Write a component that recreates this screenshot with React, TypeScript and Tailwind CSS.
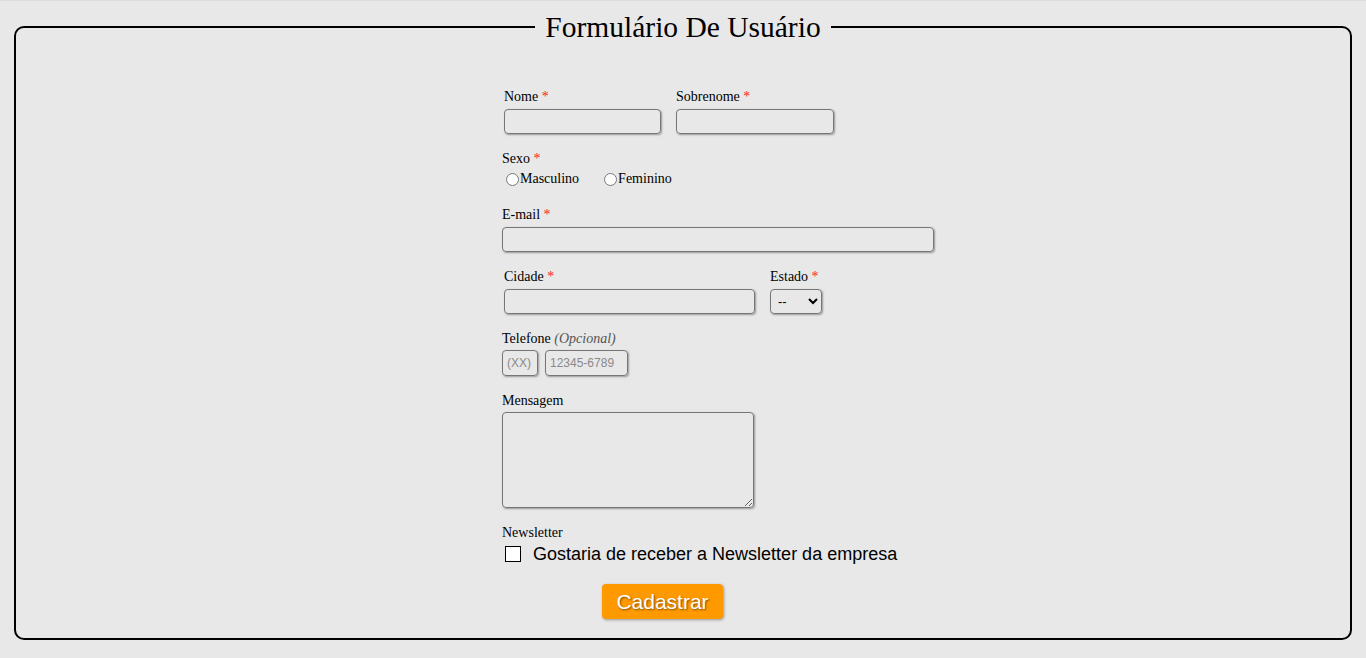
import React from 'react';

// ═══════════════════════════════════════════════════════════════════════════
// HELPERS
// ═══════════════════════════════════════════════════════════════════════════

const Req = () => <span className="text-[#ff1a1a]">*</span>;

const fieldCls =
  'block h-[25px] border border-[#767676] rounded-[4px] bg-transparent shadow-[1px_1px_2px_rgba(0,0,0,0.35)] px-1 outline-none';

const Label: React.FC<{ children: React.ReactNode; className?: string }> = ({ children, className }) => (
  <label className={`block leading-4 text-[14px] ${className ?? ''}`}>{children}</label>
);

// ═══════════════════════════════════════════════════════════════════════════
// COMPONENT
// ═══════════════════════════════════════════════════════════════════════════

export default function App() {
  return (
    <div
      className="min-h-screen bg-[#e8e8e8] border-t border-[#dcdcdc] pt-px pb-[17px] text-black"
      style={{ fontFamily: '"Liberation Serif", "Times New Roman", serif' }}
    >
      <fieldset className="mx-[14px] mt-[9px] border-2 border-black rounded-[10px] pb-[19px]">
        <legend className="mx-auto px-[10px] text-[29.5px] leading-8">Formulário De Usuário</legend>

        <form className="ml-[486px] w-[432px] pt-[46px]" onSubmit={(e) => e.preventDefault()}>
          {/* Nome / Sobrenome */}
          <div className="flex gap-[15px] pl-[2px]">
            <div>
              <Label>
                Nome <Req />
              </Label>
              <input type="text" className={`${fieldCls} mt-1 w-[157px]`} />
            </div>
            <div>
              <Label>
                Sobrenome <Req />
              </Label>
              <input type="text" className={`${fieldCls} mt-1 w-[158px]`} />
            </div>
          </div>

          {/* Sexo */}
          <Label className="mt-[17px]">
            Sexo <Req />
          </Label>
          <div className="flex items-center mt-[4px] text-[14px] leading-4">
            <label className="flex items-center mr-[25px]">
              <input type="radio" name="sexo" className="ml-[4px] mr-[1px] w-[13px] h-[13px]" />
              Masculino
            </label>
            <label className="flex items-center">
              <input type="radio" name="sexo" className="mr-[1px] w-[13px] h-[13px]" />
              Feminino
            </label>
          </div>

          {/* E-mail */}
          <Label className="mt-[20px]">
            E-mail <Req />
          </Label>
          <input type="email" className={`${fieldCls} mt-1 w-[432px]`} />

          {/* Cidade / Estado */}
          <div className="flex gap-[15px] pl-[2px] mt-[17px]">
            <div>
              <Label>
                Cidade <Req />
              </Label>
              <input type="text" className={`${fieldCls} mt-1 w-[251px]`} />
            </div>
            <div>
              <Label>
                Estado <Req />
              </Label>
              <select
                className={`${fieldCls} mt-1 w-[52px] text-[13px] px-[3px]`}
                style={{ fontFamily: '"Liberation Sans", Arial, sans-serif' }}
              >
                <option>--</option>
              </select>
            </div>
          </div>

          {/* Telefone */}
          <Label className="mt-[17px]">
            Telefone <i className="text-[#555]">(Opcional)</i>
          </Label>
          <div
            className="flex gap-[7px] mt-[3px] text-[12px]"
            style={{ fontFamily: '"Liberation Sans", Arial, sans-serif' }}
          >
            <input
              type="text"
              placeholder="(XX)"
              className={`${fieldCls} h-[26px] w-[36px] placeholder:text-[#8a8a8a]`}
            />
            <input
              type="text"
              placeholder="12345-6789"
              className={`${fieldCls} h-[26px] w-[83px] placeholder:text-[#8a8a8a]`}
            />
          </div>

          {/* Mensagem */}
          <Label className="mt-[17px]">Mensagem</Label>
          <textarea className="block mt-[3px] w-[252px] h-[96px] border border-[#767676] rounded-[4px] bg-transparent shadow-[1px_1px_2px_rgba(0,0,0,0.35)] outline-none" />

          {/* Newsletter */}
          <Label className="mt-[17px]">Newsletter</Label>
          <label
            className="flex items-center mt-[3px] text-[18px] leading-5"
            style={{ fontFamily: '"Liberation Sans", Arial, sans-serif' }}
          >
            <input
              type="checkbox"
              className="appearance-none ml-[3px] mr-[12px] w-[16px] h-[16px] border-[1.5px] border-black bg-white"
            />
            Gostaria de receber a Newsletter da empresa
          </label>

          {/* Submit */}
          <button
            type="submit"
            className="block ml-[100px] mt-[20px] w-[121px] h-[35px] rounded-[4px] bg-[#ff9900] text-white text-[21px] [text-shadow:1px_1px_2px_rgba(0,0,0,0.5)] shadow-[1px_1px_3px_rgba(0,0,0,0.35)]"
            style={{ fontFamily: '"Liberation Sans", Arial, sans-serif' }}
          >
            Cadastrar
          </button>
        </form>
      </fieldset>
    </div>
  );
}
